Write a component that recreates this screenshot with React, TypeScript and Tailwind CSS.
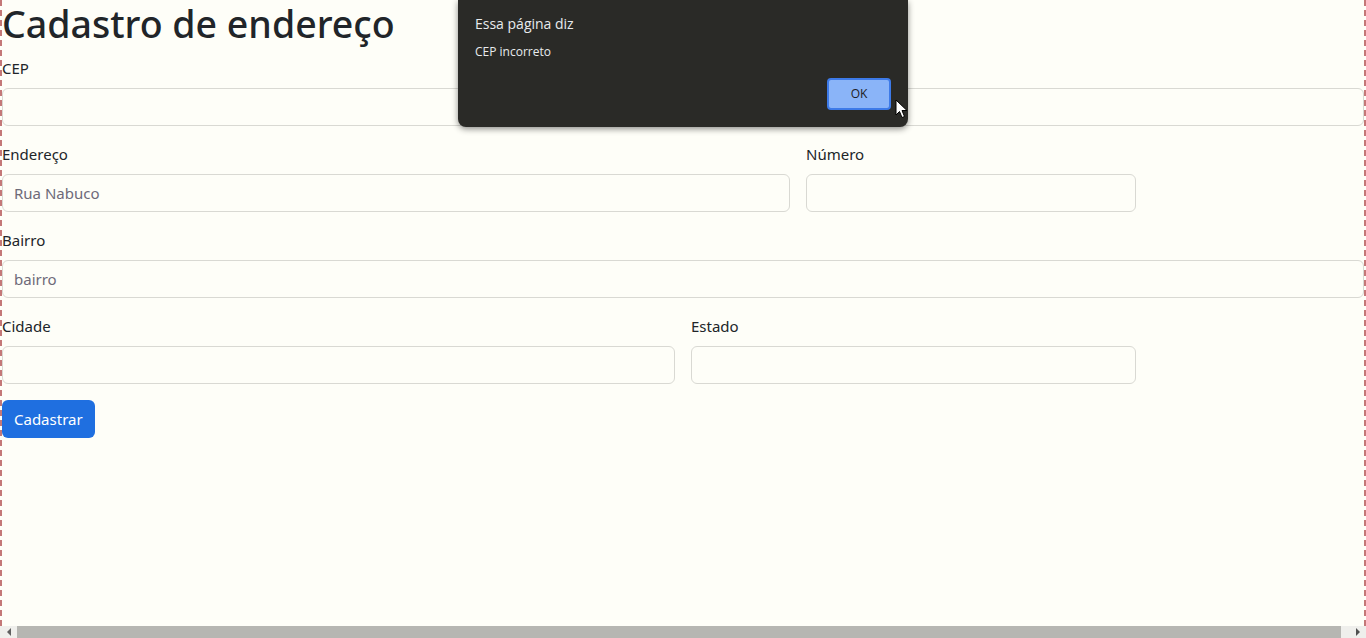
import { useState } from "react"

type Field = { id: string; label: string; placeholder?: string; width: string }

const rowA: Field[] = [
  { id: "endereco", label: "Endereço", placeholder: "Rua Nabuco", width: "w-[788px]" },
  { id: "numero", label: "Número", width: "w-[330px]" },
]

const rowB: Field[] = [
  { id: "cidade", label: "Cidade", width: "w-[673px]" },
  { id: "estado", label: "Estado", width: "w-[445px]" },
]

function Input({ id, placeholder }: { id: string; placeholder?: string }) {
  return (
    <input
      id={id}
      placeholder={placeholder}
      className="block w-full h-[38px] pl-[11px] pr-3 rounded-md border border-[#d9d9d3] bg-transparent text-[15px] text-[#212529] placeholder:text-[#6e6a78] outline-none"
    />
  )
}

function FieldBox({ field }: { field: Field }) {
  return (
    <div className={field.width}>
      <label htmlFor={field.id} className="block mb-2 leading-6">
        {field.label}
      </label>
      <Input id={field.id} placeholder={field.placeholder} />
    </div>
  )
}

export default function App() {
  const [cep, setCep] = useState("")
  const [showAlert, setShowAlert] = useState(true)

  return (
    <div className="h-[638px] flex flex-col bg-[#fefef8] text-[#212529] text-[15px] font-['Noto_Sans',sans-serif] overflow-hidden relative">
      {/* page content */}
      <main className="flex-1 border-x-2 border-dashed border-[#c47878]">
        <h1 className="text-[37.5px] leading-[48px] font-medium mb-2">Cadastro de endereço</h1>

        <div className="mb-4">
          <label htmlFor="cep" className="block mb-2 leading-6">CEP</label>
          <input
            id="cep"
            value={cep}
            onChange={(e) => setCep(e.target.value)}
            className="block w-full h-[38px] px-3 rounded-md border border-[#d9d9d3] bg-transparent outline-none"
          />
        </div>

        <div className="flex gap-4 mb-4">
          {rowA.map((f) => (
            <FieldBox key={f.id} field={f} />
          ))}
        </div>

        <div className="mb-4">
          <label htmlFor="bairro" className="block mb-2 leading-6">Bairro</label>
          <Input id="bairro" placeholder="bairro" />
        </div>

        <div className="flex gap-4 mb-4">
          {rowB.map((f) => (
            <FieldBox key={f.id} field={f} />
          ))}
        </div>

        <button className="h-[38px] px-[12px] rounded-md bg-[#1f6fe0] text-white text-[15px]">Cadastrar</button>
      </main>

      {/* horizontal scrollbar */}
      <div className="h-[12px] flex bg-[#efefec]">
        <div className="w-[17px] flex items-center justify-center">
          <span className="w-0 h-0 border-y-[4px] border-y-transparent border-r-[4px] border-r-[#606060]" />
        </div>
        <div className="flex-1 bg-[#b6b6b2]" />
        <div className="w-[25px] flex items-center justify-end pr-[6px]">
          <span className="w-0 h-0 border-y-[4px] border-y-transparent border-l-[4px] border-l-[#505050]" />
        </div>
      </div>

      {/* browser alert */}
      {showAlert && (
        <div className="absolute left-[458px] top-0 w-[450px] h-[127px] bg-[#2a2a27] rounded-b-lg shadow-[0_2px_6px_rgba(0,0,0,0.45)] px-[17px] pt-[14px] font-['Open_Sans',sans-serif]">
          <p className="text-[14px] leading-5 text-[#e8eaed]">Essa página diz</p>
          <p className="text-[12px] leading-4 text-[#e8eaed] mt-[10px]">CEP incorreto</p>
          <div className="flex justify-end mt-[18px]">
            <button
              onClick={() => setShowAlert(false)}
              className="w-[64px] h-[32px] rounded-[4px] bg-[#8ab4f8] border-2 border-[#3d7ae8] text-[12px] text-[#202124]"
            >
              OK
            </button>
          </div>
        </div>
      )}

      {/* mouse cursor */}
      <svg className="absolute left-[895px] top-[99px]" width="13" height="20" viewBox="0 0 13 20">
        <path d="M1 1 L1 16 L4.5 12.5 L7 18.5 L9.5 17.5 L7 11.5 L12 11.5 Z" fill="#fff" stroke="#000" strokeWidth="1" strokeLinejoin="round" />
      </svg>
    </div>
  )
}
